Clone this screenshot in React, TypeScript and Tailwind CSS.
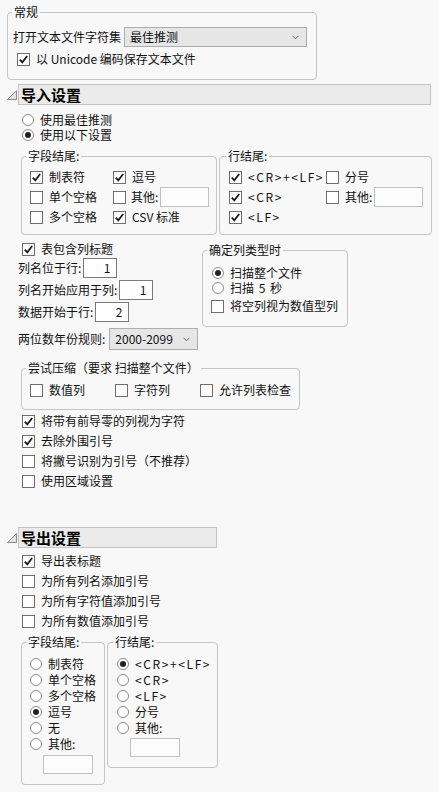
import React from 'react'

// small building blocks for the dialog look

function Check({ checked = false }: { checked?: boolean }) {
  return (
    <span className="w-[13px] h-[13px] shrink-0 border border-[#6f6f6f] bg-white flex items-center justify-center">
      {checked && (
        <svg width="11" height="11" viewBox="0 0 11 11">
          <path d="M1.8 5.6 L4.3 8.4 L9.2 2" stroke="#1a1a1a" strokeWidth="1.8" fill="none" />
        </svg>
      )}
    </span>
  )
}

function Radio({ on = false }: { on?: boolean }) {
  return (
    <span className="w-[12px] h-[12px] shrink-0 rounded-full border border-[#8a8a8a] bg-white flex items-center justify-center">
      {on && <span className="w-[6px] h-[6px] rounded-full bg-[#202020]" />}
    </span>
  )
}

function CheckItem({ checked, label, className = '' }: { checked?: boolean; label: React.ReactNode; className?: string }) {
  return (
    <div className={`flex items-center ${className}`}>
      <Check checked={checked} />
      <span className="ml-[6px] whitespace-nowrap">{label}</span>
    </div>
  )
}

function RadioItem({ on, label, className = '' }: { on?: boolean; label: React.ReactNode; className?: string }) {
  return (
    <div className={`flex items-center ${className}`}>
      <Radio on={on} />
      <span className="ml-[6px] whitespace-nowrap">{label}</span>
    </div>
  )
}

function Box({ legend, className = '', legendClass = 'ml-[4px]', children }: { legend: string; className?: string; legendClass?: string; children: React.ReactNode }) {
  return (
    <fieldset className={`border border-[#c5c5c5] rounded-[4px] min-w-0 ${className}`}>
      <legend className={`px-[2px] leading-[16px] whitespace-nowrap ${legendClass}`}>{legend}</legend>
      {children}
    </fieldset>
  )
}

function Chevron() {
  return (
    <svg width="7" height="5" viewBox="0 0 7 5">
      <path d="M0.5 0.8 L3.5 3.8 L6.5 0.8" stroke="#666" strokeWidth="1" fill="none" />
    </svg>
  )
}

function Select({ value, className = '' }: { value: string; className?: string }) {
  return (
    <div className={`bg-[#e6e6e6] border border-[#adadad] flex items-center justify-between pl-[5px] pr-[7px] ${className}`}>
      <span>{value}</span>
      <Chevron />
    </div>
  )
}

function Header({ title, className = '' }: { title: string; className?: string }) {
  return (
    <div className="flex items-center">
      <div className="w-[18px] pl-[7px] flex items-center">
        <svg width="10" height="10" viewBox="0 0 10 10">
          <polygon points="0.5,9.5 9.5,9.5 9.5,0.5" fill="#e2e2e2" stroke="#8c8c8c" strokeWidth="1" />
        </svg>
      </div>
      <div className={`h-[21px] bg-[#ebebeb] border border-[#c3c3c3] flex items-center pl-[2px] text-[15px] font-bold text-black ${className}`}>
        {title}
      </div>
    </div>
  )
}

const OtherInput = ({ className = '' }: { className?: string }) => (
  <div className={`bg-[#fcfcfc] border border-[#c0c0c0] ${className}`} />
)

const NumInput = ({ value }: { value: string }) => (
  <div className="ml-[2px] w-[34px] h-[20px] bg-white border border-[#7a7a7a] flex items-center justify-end pr-[6px]">{value}</div>
)

const crlf = <span className="tracking-[1.6px]">&lt;CR&gt;+&lt;LF&gt;</span>
const cr = <span className="tracking-[1.6px]">&lt;CR&gt;</span>
const lf = <span className="tracking-[1.6px]">&lt;LF&gt;</span>

export default function App() {
  return (
    <div className="w-[439px] h-[792px] overflow-hidden bg-[#f8f8f8] text-[12px] leading-[16px] text-[#111] font-['Noto_Sans_CJK_SC','Noto_Sans',sans-serif] pt-[4px]">
      {/* 常规 */}
      <Box legend="常规" className="ml-[7px] w-[310px] pb-[12px]">
        <div className="flex items-center h-[20px] mt-[7px] pl-[5px]">
          <span className="whitespace-nowrap">打开文本文件字符集</span>
          <Select value="最佳推测" className="ml-[3px] w-[183px] h-[20px]" />
        </div>
        <CheckItem checked label="以 Unicode 编码保存文本文件" className="mt-[4px] h-[16px] pl-[9px]" />
      </Box>

      {/* 导入设置 */}
      <div className="mt-[4px]">
        <Header title="导入设置" className="flex-1 mr-[8px]" />
      </div>

      <div className="mt-[7px] pl-[22px]">
        <RadioItem label="使用最佳推测" className="h-[15px] leading-[15px]" />
        <RadioItem on label="使用以下设置" className="h-[15px] leading-[15px]" />
      </div>

      <div className="flex mt-[6px] ml-[21px] gap-[2px]">
        <Box legend="字段结尾:" className="w-[196px]">
          <div className="grid grid-cols-[83px_1fr] pt-[3px] pb-[7px] pl-[8px]">
            <CheckItem checked label="制表符" className="h-[20px]" />
            <CheckItem checked label="逗号" className="h-[20px]" />
            <CheckItem label="单个空格" className="h-[20px]" />
            <div className="flex items-center h-[20px]">
              <Check />
              <span className="ml-[5px]">其他:</span>
              <OtherInput className="ml-[2px] w-[49px] h-[20px]" />
            </div>
            <CheckItem label="多个空格" className="h-[20px]" />
            <CheckItem checked label="CSV 标准" className="h-[20px]" />
          </div>
        </Box>
        <Box legend="行结尾:" legendClass="ml-[6px]" className="w-[213px]">
          <div className="grid grid-cols-[97px_1fr] pt-[3px] pb-[7px] pl-[9px]">
            <CheckItem checked label={crlf} className="h-[20px]" />
            <CheckItem label="分号" className="h-[20px]" />
            <CheckItem checked label={cr} className="h-[20px]" />
            <div className="flex items-center h-[20px]">
              <Check />
              <span className="ml-[6px]">其他:</span>
              <OtherInput className="ml-[2px] w-[49px] h-[20px]" />
            </div>
            <CheckItem checked label={lf} className="h-[20px]" />
          </div>
        </Box>
      </div>

      <div className="flex mt-[6px] items-start">
        <div className="w-[202px]">
          <CheckItem checked label="表包含列标题" className="h-[16px] pl-[22px]" />
          <div className="flex items-center h-[20px] mt-[1px] pl-[18px]">
            <span>列名位于行:</span>
            <NumInput value="1" />
          </div>
          <div className="flex items-center h-[20px] mt-[2px] pl-[18px]">
            <span>列名开始应用于列:</span>
            <NumInput value="1" />
          </div>
          <div className="flex items-center h-[20px] mt-[2px] pl-[18px]">
            <span>数据开始于行:</span>
            <NumInput value="2" />
          </div>
        </div>
        <Box legend="确定列类型时" className="w-[146px] mt-[1px]">
          <div className="pt-[7px] pb-[12px]">
            <RadioItem on label="扫描整个文件" className="h-[15px] leading-[15px] pl-[9px]" />
            <RadioItem label="扫描 5 秒" className="h-[15px] leading-[15px] pl-[9px] [word-spacing:2px]" />
            <CheckItem label="将空列视为数值型列" className="h-[16px] mt-[3px] pl-[8px]" />
          </div>
        </Box>
      </div>

      <div className="flex items-center h-[22px] mt-[1px] pl-[18px]">
        <span>两位数年份规则:</span>
        <Select value="2000-2099" className="ml-[4px] w-[89px] h-[22px]" />
      </div>

      <Box legend="尝试压缩（要求 扫描整个文件）" className="mt-[10px] ml-[21px] w-[279px]">
        <div className="flex pt-[6px] pb-[11px] pl-[8px]">
          <CheckItem label="数值列" className="h-[16px] w-[85px]" />
          <CheckItem label="字符列" className="h-[16px] w-[85px]" />
          <CheckItem label="允许列表检查" className="h-[16px]" />
        </div>
      </Box>

      <div className="mt-[1px] pl-[22px]">
        <CheckItem checked label="将带有前导零的列视为字符" className="h-[20px]" />
        <CheckItem checked label="去除外围引号" className="h-[20px]" />
        <CheckItem label="将撇号识别为引号（不推荐）" className="h-[20px]" />
        <CheckItem label="使用区域设置" className="h-[20px]" />
      </div>

      {/* 导出设置 */}
      <div className="mt-[36px]">
        <Header title="导出设置" className="w-[199px]" />
      </div>

      <div className="mt-[3px] pl-[22px]">
        <CheckItem checked label="导出表标题" className="h-[20px]" />
        <CheckItem label="为所有列名添加引号" className="h-[20px]" />
        <CheckItem label="为所有字符值添加引号" className="h-[20px]" />
        <CheckItem label="为所有数值添加引号" className="h-[20px]" />
      </div>

      <div className="flex mt-[3px] ml-[21px] gap-[2px] items-start">
        <Box legend="字段结尾:" className="w-[84px]">
          <div className="pt-[6px] pb-[10px]">
            <div className="pl-[8px]">
              <RadioItem label="制表符" className="h-[16px]" />
              <RadioItem label="单个空格" className="h-[16px]" />
              <RadioItem label="多个空格" className="h-[16px]" />
              <RadioItem on label="逗号" className="h-[16px]" />
              <RadioItem label="无" className="h-[16px]" />
              <RadioItem label="其他:" className="h-[16px]" />
            </div>
            <OtherInput className="mt-[3px] ml-[21px] w-[50px] h-[19px]" />
          </div>
        </Box>
        <Box legend="行结尾:" legendClass="ml-[5px]" className="w-[111px]">
          <div className="pt-[6px] pb-[10px]">
            <div className="pl-[9px]">
              <RadioItem on label={crlf} className="h-[16px]" />
              <RadioItem label={cr} className="h-[16px]" />
              <RadioItem label={lf} className="h-[16px]" />
              <RadioItem label="分号" className="h-[16px]" />
              <RadioItem label="其他:" className="h-[16px]" />
            </div>
            <OtherInput className="mt-[2px] ml-[22px] w-[50px] h-[19px]" />
          </div>
        </Box>
      </div>
    </div>
  )
}
